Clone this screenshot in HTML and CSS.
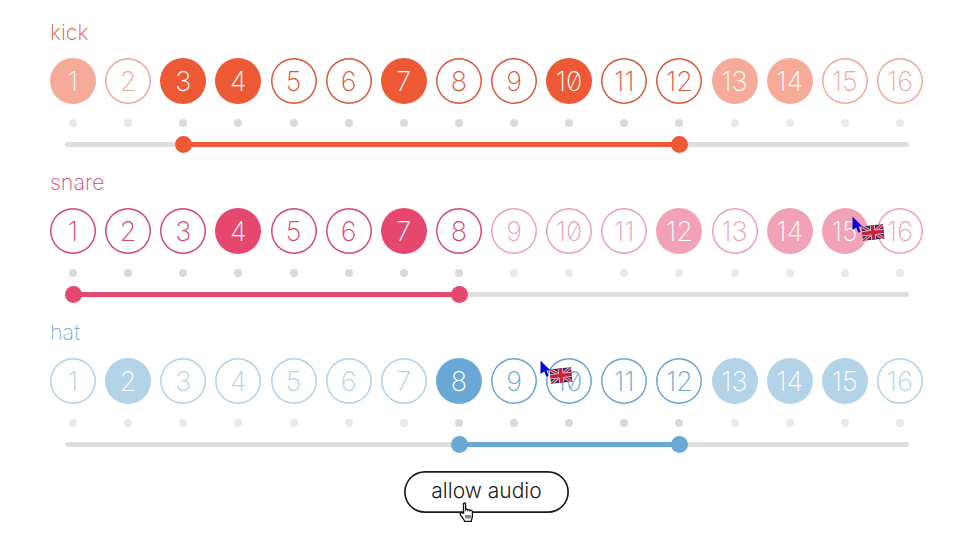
FILE: index.html
```html
<!DOCTYPE html>
<html lang="en">
<head>
  <meta charset="UTF-8">
  <title>drum sequencer</title>
  <link rel="stylesheet" href="styles.css">
</head>
<body>

  <section class="track kick">
    <h2>kick</h2>
    <div class="row">
      <div class="step fill dim">1</div><div class="step dim">2</div><div class="step fill">3</div><div class="step fill">4</div>
      <div class="step">5</div><div class="step">6</div><div class="step fill">7</div><div class="step">8</div>
      <div class="step">9</div><div class="step fill">10</div><div class="step">11</div><div class="step">12</div>
      <div class="step fill dim">13</div><div class="step fill dim">14</div><div class="step dim">15</div><div class="step dim">16</div>
    </div>
    <div class="row dots">
      <i class="dot"></i><i class="dot"></i><i class="dot on"></i><i class="dot on"></i>
      <i class="dot on"></i><i class="dot on"></i><i class="dot on"></i><i class="dot on"></i>
      <i class="dot on"></i><i class="dot on"></i><i class="dot on"></i><i class="dot on"></i>
      <i class="dot"></i><i class="dot"></i><i class="dot"></i><i class="dot"></i>
    </div>
    <div class="slider">
      <div class="range" style="left: 14.05%; width: 58.75%"></div>
      <div class="thumb" style="left: 14.05%"></div>
      <div class="thumb" style="left: 72.8%"></div>
    </div>
  </section>

  <section class="track snare">
    <h2>snare</h2>
    <div class="row">
      <div class="step">1</div><div class="step">2</div><div class="step">3</div><div class="step fill">4</div>
      <div class="step">5</div><div class="step">6</div><div class="step fill">7</div><div class="step">8</div>
      <div class="step dim">9</div><div class="step dim">10</div><div class="step dim">11</div><div class="step fill dim">12</div>
      <div class="step dim">13</div><div class="step fill dim">14</div><div class="step fill dim">15</div><div class="step dim">16</div>
    </div>
    <div class="row dots">
      <i class="dot on"></i><i class="dot on"></i><i class="dot on"></i><i class="dot on"></i>
      <i class="dot on"></i><i class="dot on"></i><i class="dot on"></i><i class="dot on"></i>
      <i class="dot"></i><i class="dot"></i><i class="dot"></i><i class="dot"></i>
      <i class="dot"></i><i class="dot"></i><i class="dot"></i><i class="dot"></i>
    </div>
    <div class="slider">
      <div class="range" style="left: 0.95%; width: 45.8%"></div>
      <div class="thumb" style="left: 0.95%"></div>
      <div class="thumb" style="left: 46.75%"></div>
    </div>
  </section>

  <section class="track hat">
    <h2>hat</h2>
    <div class="row">
      <div class="step dim">1</div><div class="step fill dim">2</div><div class="step dim">3</div><div class="step dim">4</div>
      <div class="step dim">5</div><div class="step dim">6</div><div class="step dim">7</div><div class="step fill">8</div>
      <div class="step">9</div><div class="step">10</div><div class="step">11</div><div class="step">12</div>
      <div class="step fill dim">13</div><div class="step fill dim">14</div><div class="step fill dim">15</div><div class="step dim">16</div>
    </div>
    <div class="row dots">
      <i class="dot"></i><i class="dot"></i><i class="dot"></i><i class="dot"></i>
      <i class="dot"></i><i class="dot"></i><i class="dot"></i><i class="dot on"></i>
      <i class="dot on"></i><i class="dot on"></i><i class="dot on"></i><i class="dot on"></i>
      <i class="dot"></i><i class="dot"></i><i class="dot"></i><i class="dot"></i>
    </div>
    <div class="slider">
      <div class="range" style="left: 46.75%; width: 26.05%"></div>
      <div class="thumb" style="left: 46.75%"></div>
      <div class="thumb" style="left: 72.8%"></div>
    </div>
  </section>

  <div class="actions">
    <button class="audio">allow audio</button>
  </div>

  <!-- other people's cursors -->
  <div class="peer peer-a">
    <svg class="arrow" width="11" height="17" viewBox="0 0 11 17"><path d="M0.5 0.5 L10.5 10.5 L6.6 10.6 L8.6 16 L6.2 16.5 L4.3 11.4 L0.5 14 Z" fill="#0a0ad8"/></svg>
    <svg class="flag" width="22" height="15" viewBox="0 0 22 15">
      <rect width="22" height="15" fill="#2b2f6e"/>
      <path d="M0 0 L22 15 M22 0 L0 15" stroke="#e9d0d6" stroke-width="3"/>
      <path d="M0 0 L22 15 M22 0 L0 15" stroke="#c4233f" stroke-width="1.5"/>
      <path d="M11 0 V15 M0 7.5 H22" stroke="#e9d0d6" stroke-width="5"/>
      <path d="M11 0 V15 M0 7.5 H22" stroke="#c4233f" stroke-width="3.5"/>
    </svg>
  </div>
  <div class="peer peer-b">
    <svg class="arrow" width="11" height="17" viewBox="0 0 11 17"><path d="M0.5 0.5 L10.5 10.5 L6.6 10.6 L8.6 16 L6.2 16.5 L4.3 11.4 L0.5 14 Z" fill="#0a0ad8"/></svg>
    <svg class="flag" width="22" height="15" viewBox="0 0 22 15">
      <rect width="22" height="15" fill="#2b2f6e"/>
      <path d="M0 0 L22 15 M22 0 L0 15" stroke="#e9d0d6" stroke-width="3"/>
      <path d="M0 0 L22 15 M22 0 L0 15" stroke="#c4233f" stroke-width="1.5"/>
      <path d="M11 0 V15 M0 7.5 H22" stroke="#e9d0d6" stroke-width="5"/>
      <path d="M11 0 V15 M0 7.5 H22" stroke="#c4233f" stroke-width="3.5"/>
    </svg>
  </div>

  <svg class="hand" width="15" height="20" viewBox="0 0 15 20">
    <path d="M4.5 11 V2 C4.5 0.5 6.6 0.5 6.6 2 V7.5 C7 6.8 8.6 6.8 8.8 8 C9.3 7.3 10.8 7.5 11 8.6 C11.6 8 13.4 8.3 13.4 9.8 V14 C13.4 16 12.6 17 12.3 19.3 H5.6 C5 17.3 3.4 15.8 1.6 13.2 C0.3 11.3 2.3 9.8 3.6 11 Z" fill="#fff" stroke="#111" stroke-width="1.3"/>
    <path d="M7 13 V16.5 M9 13 V16.5 M11 13 V16.5" stroke="#111" stroke-width="1"/>
  </svg>

</body>
</html>
```

FILE: styles.css
```css
body {
  margin: 0;
  padding: 17px 37px 0 50px;
  font-family: Inter, "Liberation Sans", sans-serif;
  background-color: #fff;
  overflow: hidden;
}

.track {
  height: 150px;
}

.kick {
  --color: #ee5935;
  --line: #d9573a;
  --label: #cf5f47;
}

.snare {
  --color: #e5476f;
  --line: #d44770;
  --label: #d0507a;
}

.hat {
  --color: #6aa9d5;
  --line: #6aa6d0;
  --label: #74aed8;
}

.track h2 {
  margin: 0 0 11px;
  height: 30px;
  font-size: 21.5px;
  font-weight: 250;
  line-height: 31px;
  color: var(--label);
}

.row {
  display: flex;
  justify-content: space-between;
}

.step {
  width: 46px;
  height: 46px;
  border-radius: 50%;
  box-shadow: inset 0 0 0 1.5px var(--line);
  display: flex;
  align-items: center;
  justify-content: center;
  font-size: 27px;
  font-weight: 230;
  font-feature-settings: "zero";
  color: var(--line);
}

.step.fill {
  background-color: var(--color);
  box-shadow: none;
  color: #fff;
}

.step.dim {
  opacity: 0.5;
}

.dots {
  margin-top: 15px;
  padding: 0 19px;
}

.dot {
  width: 8px;
  height: 8px;
  border-radius: 50%;
  background-color: #e9e9e9;
}

.dot.on {
  background-color: #dadada;
}

.slider {
  position: relative;
  height: 5px;
  margin: 14.5px 14px 0 15px;
  border-radius: 3px;
  background-color: #dedede;
}

.range {
  position: absolute;
  top: 0;
  bottom: 0;
  background-color: var(--color);
}

.thumb {
  position: absolute;
  top: -6px;
  width: 17px;
  height: 17px;
  margin-left: -8.5px;
  border-radius: 50%;
  background-color: var(--color);
}

.actions {
  display: flex;
  justify-content: center;
  margin-top: 4px;
}

.audio {
  width: 165px;
  height: 42px;
  padding: 0 0 4px;
  border: none;
  border-radius: 21px;
  box-shadow: inset 0 0 0 1.7px #1c1c1c;
  background: #fff;
  font-family: Inter, "Liberation Sans", sans-serif;
  font-size: 21px;
  font-weight: 320;
  color: #1c1c1c;
}

.peer {
  position: absolute;
}

.peer-a {
  left: 852px;
  top: 216px;
}

.peer-b {
  left: 540px;
  top: 360px;
}

.arrow {
  position: absolute;
  left: 0;
  top: 0;
}

.flag {
  position: absolute;
  left: 10px;
  top: 8px;
  transform: rotate(-6deg);
}

.peer-a .flag {
  top: 9px;
}

.hand {
  position: absolute;
  left: 459px;
  top: 502px;
}
```
